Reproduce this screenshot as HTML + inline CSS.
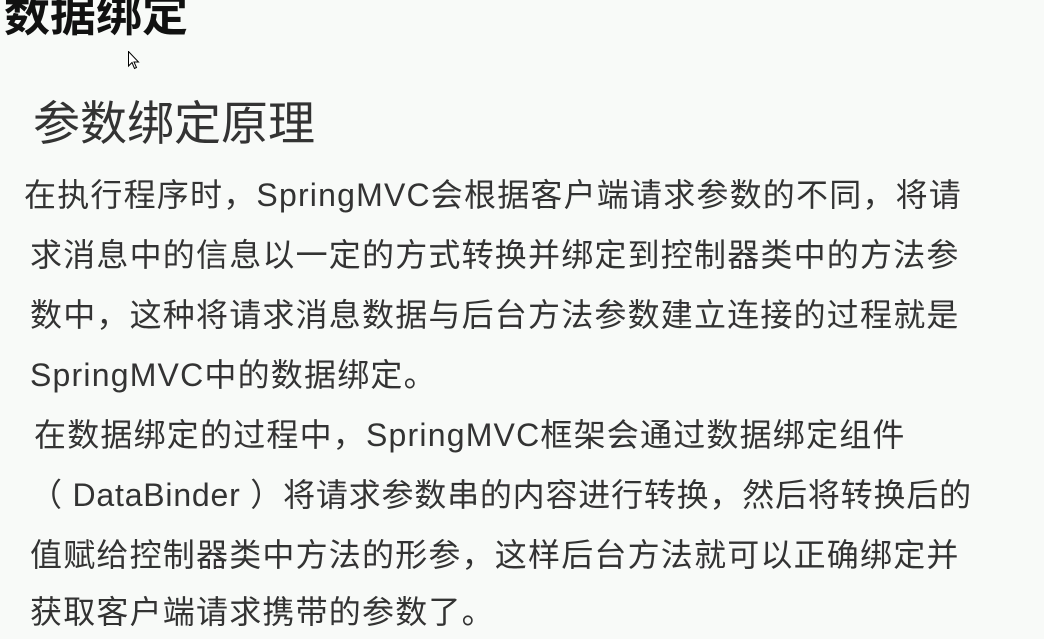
<!DOCTYPE html>
<html><head><meta charset="utf-8"><style>
html,body{margin:0;padding:0;width:1044px;height:639px;overflow:hidden;background:#f8faf8;}
body{position:relative;font-family:"Liberation Sans","Noto Sans CJK SC",sans-serif;color:#333;}
.t{position:absolute;left:4px;top:-15px;font-size:46px;font-weight:bold;color:#111;white-space:nowrap;line-height:60px;}
.h{position:absolute;left:33px;top:94px;font-size:47px;color:#333;white-space:nowrap;line-height:60px;}
.l{position:absolute;font-size:32px;letter-spacing:1.2px;white-space:nowrap;line-height:40px;color:#333;}
</style></head><body>
<div class="t">数据绑定</div>
<svg style="position:absolute;left:128px;top:51px" width="12" height="20" viewBox="0 0 12 20"><path d="M0.5 0.5 L0.5 15 L4 11.5 L6.5 17.5 L8.5 16.5 L6 11 L10.5 11 Z" fill="#fff" stroke="#000" stroke-width="1"/></svg>
<div class="h">参数绑定原理</div>
<div class="l" style="left:24px;top:175px">在执行程序时，SpringMVC会根据客户端请求参数的不同，将请</div>
<div class="l" style="left:30px;top:235px">求消息中的信息以一定的方式转换并绑定到控制器类中的方法参</div>
<div class="l" style="left:30px;top:295px">数中，这种将请求消息数据与后台方法参数建立连接的过程就是</div>
<div class="l" style="left:30px;top:355px">SpringMVC中的数据绑定。</div>
<div class="l" style="left:34px;top:415px">在数据绑定的过程中，SpringMVC框架会通过数据绑定组件</div>
<div class="l" style="left:30px;top:475px;letter-spacing:0.8px">（ DataBinder ）将请求参数串的内容进行转换，然后将转换后的</div>
<div class="l" style="left:30px;top:535px">值赋给控制器类中方法的形参，这样后台方法就可以正确绑定并</div>
<div class="l" style="left:30px;top:592px">获取客户端请求携带的参数了。</div>
</body></html>
